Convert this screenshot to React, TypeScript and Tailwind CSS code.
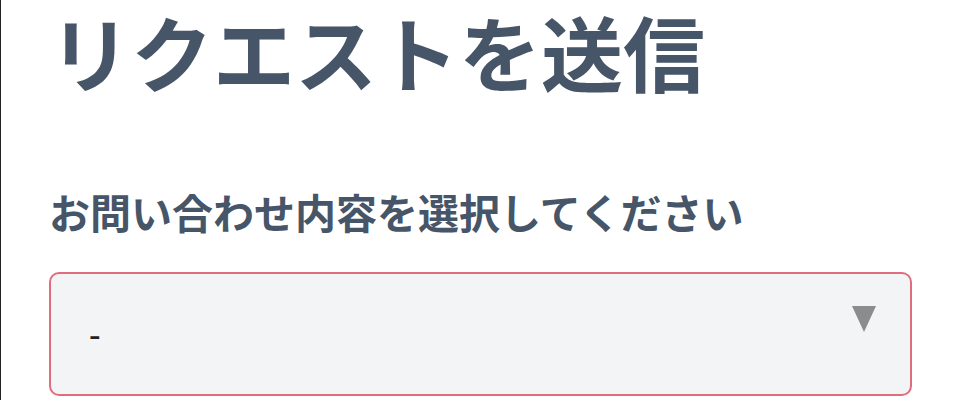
import React from 'react';

const App = () => {
  return (
    <div className="h-[400px] w-[960px] overflow-hidden border-l border-[#222] bg-white pl-12 pr-12 font-['Noto_Sans_CJK_JP',sans-serif]">
      {/* Title */}
      <h1 className="whitespace-nowrap text-[82px] font-bold leading-[1.25] text-[#475569]">
        リクエストを送信
      </h1>

      {/* Inquiry type */}
      <label className="mt-[83px] block whitespace-nowrap text-[41px] font-bold leading-[1.25] text-[#475569]">
        お問い合わせ内容を選択してください
      </label>

      <div className="relative mt-[35px] flex h-[124px] items-center rounded-[10px] border-2 border-[#e06d7c] bg-[#f3f4f6] pl-[38px]">
        <span className="font-['Noto_Sans',sans-serif] text-[36px] text-[#222]">-</span>
        <svg
          className="absolute right-[34px] top-[32px]"
          width="24"
          height="26"
          viewBox="0 0 24 26"
        >
          <polygon points="0,0 24,0 12,26" fill="#8c8c8c" />
        </svg>
      </div>
    </div>
  );
};

export default App;
